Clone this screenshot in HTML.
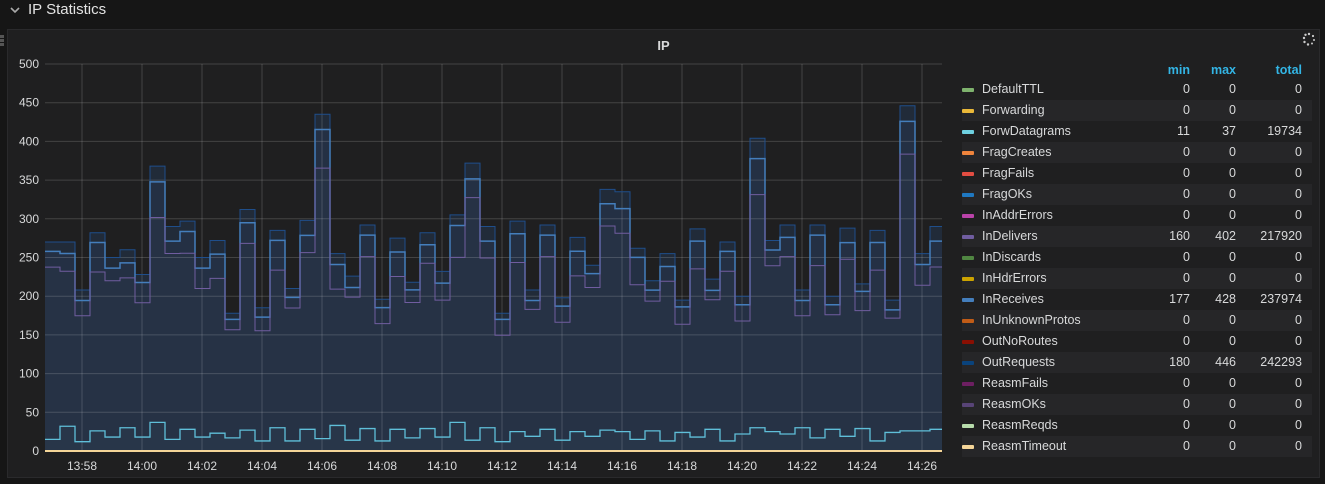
<!DOCTYPE html>
<html><head><meta charset="utf-8"><style>
*{margin:0;padding:0;box-sizing:border-box}
body{width:1325px;height:484px;background:#161616;font-family:"Liberation Sans",sans-serif;color:#d8d9da;position:relative;overflow:hidden}
.hdr{position:absolute;left:28px;top:1px;font-size:15px;color:#e3e3e3}
.chev{position:absolute;left:9px;top:6px}
.panel{position:absolute;left:7px;top:29px;width:1313px;height:449px;background:#1f1f20;border:1px solid #2a2a2c}
.title{position:absolute;left:0;width:100%;top:8px;text-align:center;font-weight:bold;font-size:13px;color:#d8d9da}
.leg{position:absolute;left:962px;font-size:12.5px}
.row{position:absolute;left:0;width:350px;height:21px;line-height:21px}
.row.alt{background:#262628}
.sw{position:absolute;left:0;top:9px;width:12px;height:4px;border-radius:1px}
.nm{position:absolute;left:20px}
.c{position:absolute;text-align:right;width:60px}
.h{color:#33b5e5;font-weight:bold}
</style></head><body>
<svg class="chev" width="12" height="10"><path d="M2 2 L6 6 L10 2" stroke="#aaa" stroke-width="1.6" fill="none"/></svg>
<div class="hdr">IP Statistics</div>
<div style="position:absolute;left:0;top:35px;width:4px;height:12px;background:repeating-linear-gradient(#555 0 3px,transparent 3px 4px)"></div>
<div class="panel">
<div class="title">IP</div>
<svg width="14" height="14" style="position:absolute;right:3px;top:2px"><g fill="#ccc"><circle cx="7" cy="2" r="1.2"/><circle cx="11" cy="4" r="1.1"/><circle cx="12" cy="8" r="1"/><circle cx="10" cy="11.5" r="1"/><circle cx="6" cy="12.5" r="1.2"/><circle cx="2.5" cy="10" r="1.2"/><circle cx="2" cy="6" r="1.2"/><circle cx="3.5" cy="2.8" r="1.2"/></g></svg>
</div>
<svg id="ch" width="960" height="484" style="position:absolute;left:0;top:0"></svg>
<div class="leg" id="leg" style="top:60px"></div>
<script>
var s='',g='',Y=function(v){return 451-v*0.774};
for(var v=0;v<=500;v+=50){var y=Y(v);g+='<line x1="45" x2="942" y1="'+y+'" y2="'+y+'" stroke="rgba(255,255,255,0.16)"/>';s+='<text x="39" y="'+(y+4)+'" fill="#d8d9da" font-size="12" text-anchor="end" font-family="Liberation Sans">'+v+'</text>';}
var lab=['13:58','14:00','14:02','14:04','14:06','14:08','14:10','14:12','14:14','14:16','14:18','14:20','14:22','14:24','14:26'];
for(var i=0;i<15;i++){var x=82+i*60;g+='<line x1="'+x+'" x2="'+x+'" y1="64" y2="451" stroke="rgba(255,255,255,0.16)"/>';s+='<text x="'+x+'" y="470" fill="#d8d9da" font-size="12" text-anchor="middle" font-family="Liberation Sans">'+lab[i]+'</text>';}
var tv=[270,270,208,282,250,260,228,368,290,297,250,272,178,312,185,285,210,298,435,255,226,292,196,275,218,282,232,305,372,290,178,297,208,292,198,276,240,338,335,262,220,255,195,287,222,270,200,404,272,292,208,292,200,288,216,285,195,446,255,290];
var cy=[15,32,12,26,18,30,18,37,15,28,18,23,17,27,13,30,13,28,16,33,14,29,13,28,17,29,18,37,14,30,12,25,19,28,14,25,19,27,25,15,26,13,24,18,28,13,22,30,25,22,30,17,28,19,29,13,24,26,26,28];
function path(arr,f){var p='M45 '+Y(f(arr[0],0));for(var k=0;k<arr.length;k++){var x0=45+k*15,x1=Math.min(942,x0+15),yy=Y(f(arr[k],k));p+=' L'+x0+' '+yy+' L'+x1+' '+yy;}return p;}
function area(p){return p+' L942 451 L45 451 Z';}
var fo=function(v){return v},fr=function(v,k){return v*(0.955-0.01*(k%3))},fd=function(v,k){return v*(0.88-0.02*(k%4))},fc=function(v){return v};
s+='<path d="'+area(path(tv,fo))+'" fill="#212b39" stroke="none"/>';
s+='<path d="'+area(path(tv,fr))+'" fill="#243044" stroke="none"/>';
s+='<path d="'+area(path(tv,fd))+'" fill="#263245" stroke="none"/>';
s+='<path d="'+area(path(cy,fc))+'" fill="#283649"/>';
s+=g;
s+='<path d="'+path(tv,fo)+'" fill="none" stroke="#1f4e8a" stroke-width="1"/>';
s+='<path d="'+path(tv,fr)+'" fill="none" stroke="#447ebc" stroke-width="1.5"/>';
s+='<path d="'+path(tv,fd)+'" fill="none" stroke="#705da0" stroke-width="1"/>';
s+='<path d="'+path(cy,fc)+'" fill="none" stroke="#5fbfd9" stroke-width="1.3"/>';
s+='<line x1="45" x2="942" y1="451" y2="451" stroke="#f4d598" stroke-width="2"/>';
document.getElementById('ch').innerHTML=s;
var L=[['DefaultTTL','#7eb26d',0,0,0],['Forwarding','#eab839',0,0,0],['ForwDatagrams','#6ed0e0',11,37,19734],['FragCreates','#ef843c',0,0,0],['FragFails','#e24d42',0,0,0],['FragOKs','#1f78c1',0,0,0],['InAddrErrors','#ba43a9',0,0,0],['InDelivers','#705da0',160,402,217920],['InDiscards','#508642',0,0,0],['InHdrErrors','#cca300',0,0,0],['InReceives','#447ebc',177,428,237974],['InUnknownProtos','#c15c17',0,0,0],['OutNoRoutes','#890f02',0,0,0],['OutRequests','#0a437c',180,446,242293],['ReasmFails','#6d1f62',0,0,0],['ReasmOKs','#584477',0,0,0],['ReasmReqds','#b7dbab',0,0,0],['ReasmTimeout','#f4d598',0,0,0]];
var h='<div class="row" style="top:0"><span class="c h" style="left:168px">min</span><span class="c h" style="left:214px">max</span><span class="c h" style="left:280px">total</span></div>';
for(var i=0;i<L.length;i++){var r=L[i];h+='<div class="row'+(i%2?' alt':'')+'" style="top:'+(19+i*21)+'px"><span class="sw" style="background:'+r[1]+'"></span><span class="nm">'+r[0]+'</span><span class="c" style="left:168px">'+r[2]+'</span><span class="c" style="left:214px">'+r[3]+'</span><span class="c" style="left:280px">'+r[4]+'</span></div>';}
document.getElementById('leg').innerHTML=h;
</script>
</body></html>
